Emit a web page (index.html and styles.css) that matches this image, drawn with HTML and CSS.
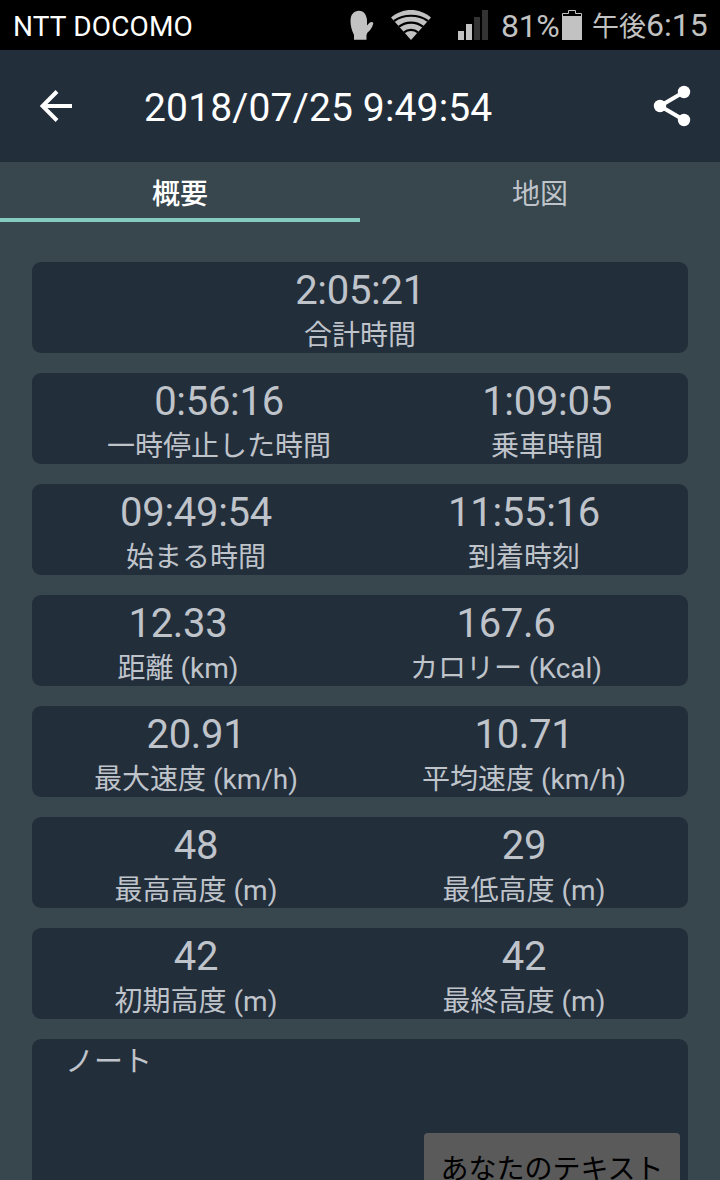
FILE: index.html
```html
<!DOCTYPE html>
<html lang="ja">

<head>
<meta charset="utf-8">
<title>2018/07/25 9:49:54</title>
<link rel="stylesheet" href="styles.css">
</head>

<body>
<div class="status">
	<span class="carrier">NTT DOCOMO</span>
	<svg class="mitten" width="24" height="30" viewBox="0 0 24 30"><path d="M4 29.700V25C1.500 20 .5 15 .5 11C.5 4.500 4 .8 9 .8C14 .8 16.500 5 17 10V15.500L19.500 12.800C21.500 11.200 23.800 12 23.200 13.800C22 18 20 21 17.500 22.500L16.500 25V29.700Z" /></svg>
	<svg class="wifi" width="40" height="30" viewBox="0 0 40 30">
		<path d="M0 7.500C11.500-2.500 28.500-2.500 40 7.500L20 30Z" />
		<g class="gap"><path d="M3 11C13 4 27 4 37 11" /><path d="M8 16.700C15 11.200 25 11.200 32 16.700" /><path d="M13 22.400C17 19 23 19 27 22.400" /></g>
	</svg>
	<svg class="signal" width="30" height="30" viewBox="0 0 30 30"><path d="M0 21h6v9H0zM8 14h6v16H8z" /><path class="off" d="M16 7h6v23h-6zM24 0h6v30h-6z" /></svg>
	<span class="percent">81%</span>
	<svg class="battery" width="20" height="30" viewBox="0 0 20 30"><path d="M0 6h20v24H0z" /><path class="shell" d="M.5 6V3.500H6.500V.5H13.500V3.500H19.500V6" /></svg>
	<span class="clock"><span class="ampm">午後</span>6:15</span>
</div>
<div class="toolbar">
	<svg class="back" width="32" height="32" viewBox="0 0 32 32"><path d="M32 16H3M17 1.500L2.500 16L17 30.500" /></svg>
	<h1>2018/07/25 9:49:54</h1>
	<svg class="share" width="38" height="42" viewBox="0 0 38 42"><path d="M31 7L7 21L31 35" /><circle cx="31" cy="7" r="6.200" /><circle cx="7" cy="21" r="6.200" /><circle cx="31" cy="35" r="6.200" /></svg>
</div>
<div class="tabs">
	<div class="tab active">概要</div>
	<div class="tab">地図</div>
</div>
<div class="cards">
	<div class="card single">
		<div><div class="value">2:05:21</div><div class="label">合計時間</div></div>
	</div>
	<div class="card riding">
		<div><div class="value">0:56:16</div><div class="label">一時停止した時間</div></div>
		<div><div class="value">1:09:05</div><div class="label">乗車時間</div></div>
	</div>
	<div class="card">
		<div><div class="value">09:49:54</div><div class="label">始まる時間</div></div>
		<div><div class="value">11:55:16</div><div class="label">到着時刻</div></div>
	</div>
	<div class="card energy">
		<div><div class="value">12.33</div><div class="label">距離 (km)</div></div>
		<div><div class="value">167.6</div><div class="label">カロリー (Kcal)</div></div>
	</div>
	<div class="card">
		<div><div class="value">20.91</div><div class="label">最大速度 (km/h)</div></div>
		<div><div class="value">10.71</div><div class="label">平均速度 (km/h)</div></div>
	</div>
	<div class="card">
		<div><div class="value">48</div><div class="label">最高高度 (m)</div></div>
		<div><div class="value">29</div><div class="label">最低高度 (m)</div></div>
	</div>
	<div class="card">
		<div><div class="value">42</div><div class="label">初期高度 (m)</div></div>
		<div><div class="value">42</div><div class="label">最終高度 (m)</div></div>
	</div>
	<div class="notes">
		<div class="label">ノート</div>
		<button class="edit">あなたのテキスト</button>
	</div>
</div>
</body>

</html>
```
FILE: styles.css
```css
* { box-sizing: border-box; }
body { margin: 0; height: 1180px; overflow: hidden; display: flex; flex-direction: column; background: #37474d; color: #bfc3ca; font-family: Roboto, "Noto Sans CJK JP", sans-serif; }
svg { display: block; flex: none; }

.status { flex: none; height: 50px; display: flex; align-items: center; padding: 0 12px 0 13px; background: #000; color: #c2c2c2; fill: #c2c2c2; font-size: 32px; line-height: 50px; white-space: nowrap; }
.carrier { width: 337px; padding-top: 3px; color: #fff; font-size: 28px; letter-spacing: .15px; }
.wifi { margin-left: 17px; }
.wifi .gap { fill: none; stroke: #000; stroke-width: 2.2; }
.signal { margin-left: 27px; }
.signal .off { fill: #333; }
.percent { width: 61px; margin-left: 13px; padding-top: 1px; letter-spacing: -.3px; }
.battery .shell { fill: none; stroke: #c2c2c2; }
.clock { margin-left: 10px; padding-top: 2px; }
.ampm { font-size: 27px; }

.toolbar { flex: none; height: 112px; display: flex; align-items: center; padding: 0 29px 0 40px; background: #232e3b; color: #fff; }
.toolbar h1 { flex: 1; margin: 3px 0 0 72px; font-size: 39px; font-weight: 400; line-height: 48px; letter-spacing: .15px; }
.back { fill: none; stroke: #fff; stroke-width: 4; }
.share { fill: #fff; }
.share path { fill: none; stroke: #fff; stroke-width: 4; }

.tabs { flex: none; height: 60px; display: flex; }
.tab { flex: 1; border-bottom: 4px solid transparent; font-size: 28px; line-height: 65px; height: 60px; text-align: center; }
.tab.active { border-color: #84cbc2; color: #fff; font-weight: 500; }

.cards { flex: none; display: flex; flex-direction: column; gap: 20px; padding: 40px 32px 0; }
.card { display: grid; grid-template-columns: 328px 328px; height: 91px; border-radius: 9px; background: #232e3b; text-align: center; }
.card.single { grid-template-columns: 1fr; }
.card.riding { grid-template-columns: 374px 282px; }
.card.energy { grid-template-columns: 292px 364px; }
.value { height: 52px; font-size: 40px; line-height: 57px; letter-spacing: -.3px; }
.label { height: 39px; font-size: 28px; line-height: 44px; white-space: nowrap; }

.notes { display: flex; flex-direction: column; height: 190px; padding: 0 8px; border-radius: 9px; background: #232e3b; }
.notes .label { padding-left: 25px; font-size: 29px; line-height: 46px; }
.edit { align-self: flex-end; width: 256px; height: 80px; margin-top: 55px; padding: 0 0 12px; border: 0; border-radius: 4px; background: #5a5a5a; color: #000; font: inherit; font-size: 28px; }
```
